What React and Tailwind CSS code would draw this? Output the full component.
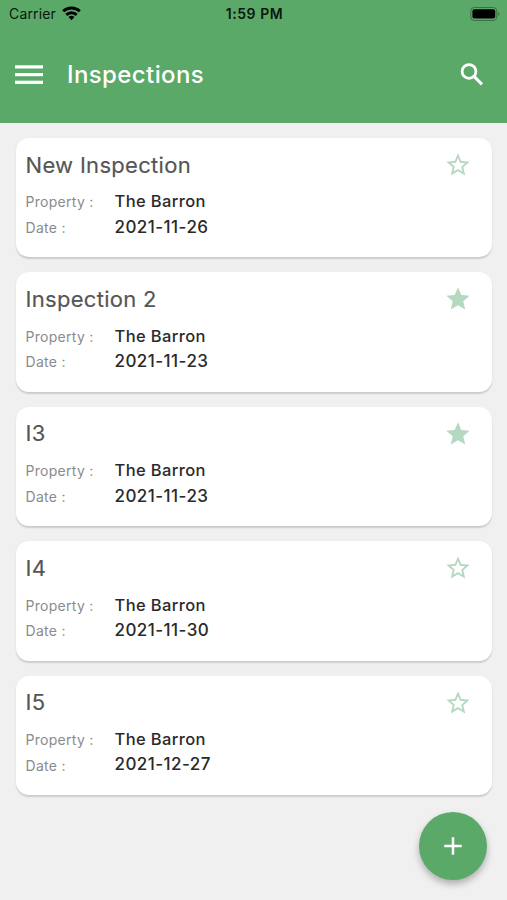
import { MdAdd, MdStar, MdStarBorder } from 'react-icons/md';

const inspections = [
    { name: 'New Inspection', property: 'The Barron', date: '2021-11-26', starred: false },
    { name: 'Inspection 2', property: 'The Barron', date: '2021-11-23', starred: true },
    { name: 'I3', property: 'The Barron', date: '2021-11-23', starred: true },
    { name: 'I4', property: 'The Barron', date: '2021-11-30', starred: false },
    { name: 'I5', property: 'The Barron', date: '2021-12-27', starred: false },
];

function StatusBar() {
    return (
        <div className="grid grid-cols-3 items-center h-[27px] pl-[9px] pr-[7px] text-[#0b170e]">
            <div className="flex items-center gap-[6px]">
                <span className="text-[14px] tracking-[0.15px]">Carrier</span>
                <svg width="19" height="15" viewBox="0 0 19 15" fill="none" stroke="#000" strokeWidth="2.9">
                    <path d="M1.2 5.3a12 12 0 0 1 16.6 0" />
                    <path d="M4.3 8.9a7.5 7.5 0 0 1 10.4 0" />
                    <path d="M9.5 14.2 6.5 11.1a4.3 4.3 0 0 1 6 0z" fill="#000" stroke="none" />
                </svg>
            </div>
            <span className="text-center text-[14px] font-semibold tracking-[0.55px] whitespace-nowrap">1:59 PM</span>
            <svg className="justify-self-end" width="30" height="14" viewBox="0 0 30 14">
                <rect x="0.8" y="0.5" width="26" height="13" rx="3.5" fill="none" stroke="#397047" />
                <rect x="2.4" y="2.2" width="22.8" height="9.2" rx="2" fill="#000" />
                <path d="M28.2 5v4c1.6-.7 1.6-3.3 0-4z" fill="#397047" />
            </svg>
        </div>
    );
}

function Header() {
    return (
        <header className="h-[123px] bg-[#5ba968]">
            <StatusBar />
            <div className="flex items-center h-[95px] pl-[15px] pr-[20px] text-white">
                <button aria-label="Menu">
                    <svg width="28" height="20" viewBox="0 0 28 20" fill="currentColor">
                        <rect y="0.3" width="28" height="3.2" />
                        <rect y="8" width="28" height="3.2" />
                        <rect y="15.7" width="28" height="3.2" />
                    </svg>
                </button>
                <h1 className="ml-[24px] text-[24px] font-medium tracking-[0.4px]">Inspections</h1>
                <button className="ml-auto" aria-label="Search">
                    <svg width="30" height="30" viewBox="0 0 24 24" fill="none" stroke="currentColor">
                        <circle cx="9.6" cy="9.1" r="5.5" strokeWidth="2.2" />
                        <path d="m13.6 13.1 6.4 6.4" strokeWidth="2.4" />
                    </svg>
                </button>
            </div>
        </header>
    );
}

function InspectionCard({ inspection }) {
    const Star = inspection.starred ? MdStar : MdStarBorder;

    return (
        <li className="h-[119.4px] rounded-[13px] bg-white pl-[10px] pr-[20px] pt-[12px] shadow-[0_1.5px_1.5px_rgba(0,0,0,0.15)]">
            <div className="flex items-center justify-between h-[30px]">
                <h2 className="text-[22px] text-[#555555] tracking-[0.3px] [-webkit-text-stroke:0.15px_#555555]">{inspection.name}</h2>
                <Star size={28} className="text-[#b5d8c0]" />
            </div>
            <dl className="mt-[9px] grid grid-cols-[89px_1fr] auto-rows-[25.7px] items-center">
                <dt className="text-[14px] text-[#8b8b8b] tracking-[0.28px]">Property :</dt>
                <dd className="text-[16.5px] font-medium text-[#2a2a2a] tracking-[0.38px]">{inspection.property}</dd>
                <dt className="text-[14px] text-[#8b8b8b] tracking-[0.28px]">Date :</dt>
                <dd className="text-[17px] font-medium text-[#2a2a2a] tracking-[0.45px]">{inspection.date}</dd>
            </dl>
        </li>
    );
}

export default function App() {
    return (
        <div className="relative h-[900px] w-[507px] overflow-hidden bg-[#f0f0f0] font-['Inter',sans-serif]">
            <Header />
            <ul className="flex flex-col gap-[15px] pl-[15.5px] pr-[15px] pt-[15px]">
                {inspections.map((inspection) => (
                    <InspectionCard key={inspection.name} inspection={inspection} />
                ))}
            </ul>

            {/* Floating add button */}
            <button
                className="absolute right-[20px] bottom-[20px] flex size-[68px] items-center justify-center rounded-full bg-[#5ba968] text-white shadow-[0_4px_7px_rgba(0,0,0,0.28)]"
                aria-label="Add inspection"
            >
                <MdAdd size={30} />
            </button>
        </div>
    );
}
